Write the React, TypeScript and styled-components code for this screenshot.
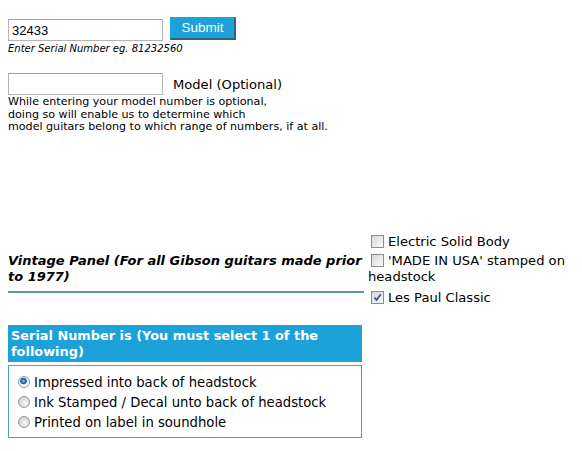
import React from 'react';
import styled, { createGlobalStyle } from 'styled-components';

const GlobalStyle = createGlobalStyle`
    body {
        margin: 8px;
        background: #fff;
        color: #000;
        font-family: "DejaVu Sans", Verdana, sans-serif;
    }
`;

const Page = styled.div`
    width: 566px;
    padding-top: 9px;
`;

const SerialRow = styled.div`
    display: flex;
    align-items: center;
    gap: 7px;
`;

const TextBox = styled.input`
    box-sizing: border-box;
    width: 155px;
    height: 22px;
    margin: 0;
    padding: 1px 3px 0;
    border: 1px solid #b4b4b4;
    border-top-color: #a0a0a0;
    font-family: "Liberation Sans", Arial, sans-serif;
    font-size: 13px;
    color: #000;
    outline: none;
`;

const SubmitButton = styled.button`
    box-sizing: border-box;
    height: 23px;
    width: 66px;
    margin: 0 0 2px;
    padding: 0 0 2px;
    background: #1ca1d8;
    color: #fff;
    font-family: "Liberation Sans", Arial, sans-serif;
    font-size: 13.5px;
    border: 1px solid #1ca1d8;
    border-right: 2px solid #3a5e78;
    border-bottom: 2px solid #3a5e78;
`;

const Hint = styled.div`
    font-size: 10px;
    font-style: italic;
    line-height: 12px;
    margin-top: 1px;
`;

const ModelRow = styled.div`
    display: flex;
    align-items: flex-end;
    gap: 10px;
    margin-top: 18px;
`;

const ModelLabel = styled.span`
    font-size: 13.1px;
    line-height: 16px;
    margin-bottom: 2px;
`;

const Note = styled.div`
    font-size: 11.1px;
    line-height: 12.5px;
    margin-top: 1px;
`;

const VintageTable = styled.div`
    display: flex;
    align-items: center;
    margin-top: 99px;
`;

const VintageHead = styled.div`
    width: 356px;
    padding-top: 5px;
`;

const VintageTitle = styled.h3`
    margin: 0;
    font-size: 13px;
    font-weight: bold;
    font-style: italic;
    line-height: 16px;
`;

const Rule = styled.div`
    height: 2px;
    margin-top: 6px;
    background: #5b9aab;
`;

const Options = styled.div`
    flex: 1;
    padding-left: 4px;
    font-size: 13.1px;
    line-height: 16px;
`;

const Option = styled.div<{ $gap?: number }>`
    padding: ${(p) => 1 + (p.$gap || 0)}px 0 2px;
`;

const Box = styled.span`
    display: inline-block;
    box-sizing: border-box;
    width: 13px;
    height: 13px;
    margin: 0 4px -2px 3px;
    border: 1px solid #8d8d8d;
    background: linear-gradient(135deg, #d6d6d6, #fbfbfb);
    position: relative;
    svg {
        position: absolute;
        left: 1px;
        top: 1px;
    }
`;

const SerialPanel = styled.div`
    width: 354px;
    margin-top: 17px;
`;

const PanelHead = styled.div`
    background: #1ca1d8;
    color: #fff;
    font-weight: bold;
    font-size: 12.9px;
    line-height: 16px;
    padding: 3px 3px 2px;
`;

const PanelBody = styled.div`
    margin-top: 3px;
    border: 1px solid #4f9fb6;
    padding: 7px 8px 4px;
    font-size: 13.2px;
    line-height: 20px;
`;

const Radio = styled.span<{ $on?: boolean }>`
    display: inline-block;
    box-sizing: border-box;
    width: 12px;
    height: 12px;
    margin: 0 4px -1px 1px;
    border-radius: 50%;
    border: 1px solid #8f9aa3;
    background: ${(p) =>
        p.$on
            ? 'radial-gradient(circle at 45% 40%, #7fc4f0 0, #1a5f9e 2.5px, #2a6fae 3px, #e6e6e6 3.6px, #fff 6px)'
            : 'radial-gradient(circle at 60% 60%, #fafafa 0, #d2d2d2 6px)'};
`;

const Check = ({ on }: { on?: boolean }) => (
    <Box>
        {on && (
            <svg width="9" height="9" viewBox="0 0 9 9">
                <path d="M1.5 4.5 L3.5 7 L7.8 1.2" fill="none" stroke="#3a5a8c" strokeWidth="1.8" />
            </svg>
        )}
    </Box>
);

export default function App() {
    return (
        <>
            <GlobalStyle />
            <Page>
                <SerialRow>
                    <TextBox defaultValue="32433" />
                    <SubmitButton>Submit</SubmitButton>
                </SerialRow>
                <Hint>Enter Serial Number eg. 81232560</Hint>
                <ModelRow>
                    <TextBox />
                    <ModelLabel>Model (Optional)</ModelLabel>
                </ModelRow>
                <Note>
                    While entering your model number is optional,
                    <br />
                    doing so will enable us to determine which
                    <br />
                    model guitars belong to which range of numbers, if at all.
                </Note>
                <VintageTable>
                    <VintageHead>
                        <VintageTitle>Vintage Panel (For all Gibson guitars made prior to 1977)</VintageTitle>
                        <Rule />
                    </VintageHead>
                    <Options>
                        <Option>
                            <Check />
                            Electric Solid Body
                        </Option>
                        <Option>
                            <Check />
                            'MADE IN USA' stamped on headstock
                        </Option>
                        <Option $gap={2}>
                            <Check on />
                            Les Paul Classic
                        </Option>
                    </Options>
                </VintageTable>
                <SerialPanel>
                    <PanelHead>Serial Number is (You must select 1 of the following)</PanelHead>
                    <PanelBody>
                        <div>
                            <Radio $on />
                            Impressed into back of headstock
                        </div>
                        <div>
                            <Radio />
                            Ink Stamped / Decal unto back of headstock
                        </div>
                        <div>
                            <Radio />
                            Printed on label in soundhole
                        </div>
                    </PanelBody>
                </SerialPanel>
            </Page>
        </>
    );
}
